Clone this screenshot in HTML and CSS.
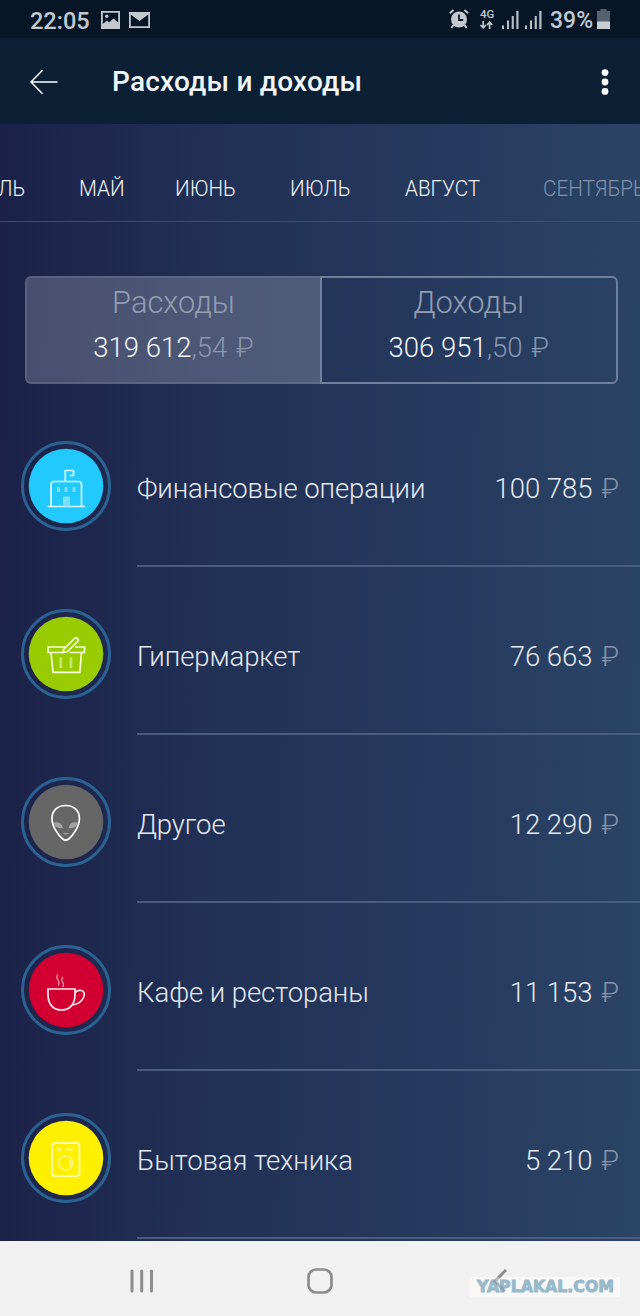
FILE: index.html
```html
<!DOCTYPE html>
<html lang="ru">
<head>
<meta charset="utf-8">
<title>Расходы и доходы</title>
<link rel="stylesheet" href="styles.css">
</head>
<body>
<div class="screen">
  <div class="status">
    <span class="time">22:05</span>
    <svg class="st-pic" width="19" height="18" viewBox="0 0 19 18"><path fill="#c3c8cf" fill-rule="evenodd" d="M0 0H19V18H0ZM1.8 1.8V13L6 9.5L8 11.5L12.5 7.5L17.2 11.5V1.8Z"/><circle cx="5.8" cy="5.2" r="1.7" fill="#c3c8cf"/></svg>
    <svg class="st-mail" width="21" height="16" viewBox="0 0 21 16"><path fill="none" stroke="#c3c8cf" stroke-width="1.8" d="M.9.9H20.1V15.1H.9Z"/><path fill="#c3c8cf" d="M1 0H20V2L10.5 9L1 2Z"/></svg>
    <span class="grow"></span>
    <svg class="st-alarm" width="20" height="20" viewBox="0 0 20 20"><g stroke="#c3c8cf" fill="none"><circle cx="10" cy="10.5" r="8" fill="#c3c8cf" stroke="none"/><path stroke-width="2" d="M.8 4.2L4.6 1M19.2 4.2L15.4 1M4.5 16L2.5 18.8M15.5 16L17.5 18.8"/><path stroke="#071626" stroke-width="1.8" d="M10 5.5V11H14.2"/></g></svg>
    <span class="net"><b>4G</b><svg width="13" height="8" viewBox="0 0 13 8"><path fill="none" stroke="#c3c8cf" stroke-width="1.7" d="M3.2 0V7M.5 4L3.2 6.8L5.9 4M9.6 8V1M6.9 4L9.6 1.2L12.3 4"/></svg></span>
    <svg class="st-sig" width="17" height="19" viewBox="0 0 17 19"><path fill="#b9bfc7" d="M0 15.500h2v3.500h-2zM5 10.500h2v8.500h-2zM9.700 6h2.100v13h-2.100zM14.300 1h2.200v18h-2.200z"/></svg>
    <svg class="st-sig" width="17" height="19" viewBox="0 0 17 19"><path fill="#b9bfc7" d="M0 15.500h2v3.500h-2zM5 10.500h2v8.500h-2zM9.700 6h2.100v13h-2.100zM14.300 1h2.200v18h-2.200z"/></svg>
    <span class="pct">39%</span>
    <svg class="st-bat" width="13" height="20" viewBox="0 0 13 20"><path fill="#56616e" d="M3.500 0h6v2H13V13H0V2H3.500z"/><path fill="#c9cdd2" d="M0 12.500H13V20H0z"/></svg>
  </div>

  <div class="appbar">
    <svg class="back" width="28" height="26" viewBox="0 0 28 26"><path fill="none" stroke="#fff" stroke-width="1.5" d="M27.500 13H1M12.500 1.200L1 13L12.500 24.800"/></svg>
    <h1>Расходы и доходы</h1>
    <svg class="more" width="8" height="26" viewBox="0 0 8 26"><g fill="#fff"><circle cx="4" cy="3.600" r="3.400"/><circle cx="4" cy="13" r="3.400"/><circle cx="4" cy="22.400" r="3.400"/></g></svg>
  </div>

  <div class="content">
    <div class="months">
      <span class="m0">ЛЬ</span><span class="m1">МАЙ</span><span class="m2">ИЮНЬ</span><span class="m3">ИЮЛЬ</span><span class="m4">АВГУСТ</span><span class="m5">СЕНТЯБРЬ</span>
    </div>

    <div class="segments">
      <div class="segment active"><span class="label">Расходы</span><span class="sum">319 612<i>,54 <em>₽</em></i></span></div>
      <div class="segment"><span class="label">Доходы</span><span class="sum">306 951<i>,50 <em>₽</em></i></span></div>
    </div>

    <div class="list">
      <div class="row">
        <svg class="badge" width="90" height="90" viewBox="0 0 90 90"><circle cx="45" cy="45" r="43.500" class="ring"/><circle cx="45" cy="45" r="37.300" fill="#22c9ff"/>
          <g fill="none" stroke="#d9fbff" stroke-width="1.700"><path d="M26.500 65.500H64M30 65.500V43.500Q30 40.500 33 40.500H57.500Q60.500 40.500 60.500 43.500V65.500M44.300 40.500V29.500H52.500V34.500H48.500"/></g>
          <g fill="#7be0ff"><path d="M36 46h3v5h-3zM43.500 46h3v5h-3zM51.500 46h3v5h-3zM42 55.500h7v10h-7z"/></g></svg>
        <div class="line"><span>Финансовые операции</span><span class="amount">100 785 <em>₽</em></span></div>
      </div>
      <div class="row">
        <svg class="badge" width="90" height="90" viewBox="0 0 90 90"><circle cx="45" cy="45" r="43.500" class="ring"/><circle cx="45" cy="45" r="37.300" fill="#9c0"/>
          <g fill="none" stroke="#f5ffd8" stroke-width="1.700"><path d="M42.500 43.500H27V38H45M48.500 43.500H63.500V38H54M30 43.500L32 63.300H58.800L60.500 43.500"/><path d="M42.500 40.500L53.500 29.500Q55 28.200 56.500 29.500Q58 31 56.600 32.500L46.500 42.500L42.300 43.500Z"/></g>
          <path fill="#c5e66b" d="M38.500 48.500h2.800v10.500h-2.800zM48.500 48.500h2.800v10.500h-2.800z"/></svg>
        <div class="line"><span>Гипермаркет</span><span class="amount">76 663 <em>₽</em></span></div>
      </div>
      <div class="row">
        <svg class="badge" width="90" height="90" viewBox="0 0 90 90"><circle cx="45" cy="45" r="43.500" class="ring"/><circle cx="45" cy="45" r="37.300" fill="#666"/>
          <path fill="none" stroke="#fff" stroke-width="1.700" d="M44.700 28.500C36.200 28.500 31 34 31 41.500C31 50 37.700 58.500 41.700 62Q44.700 64.500 47.700 62C51.700 58.500 58.400 50 58.400 41.500C58.400 34 53.200 28.500 44.700 28.500Z"/>
          <path fill="#a3a3a3" d="M32.500 45.500Q41 44.500 42 51.300Q34.500 52 32.500 45.500ZM57 45.500Q48.500 44.500 47.500 51.300Q55 52 57 45.500ZM41.700 56h6q-3 3-6 0z"/></svg>
        <div class="line"><span>Другое</span><span class="amount">12 290 <em>₽</em></span></div>
      </div>
      <div class="row">
        <svg class="badge" width="90" height="90" viewBox="0 0 90 90"><circle cx="45" cy="45" r="43.500" class="ring"/><circle cx="45" cy="45" r="37.300" fill="#d10030"/>
          <g fill="none" stroke="#ffe9ee" stroke-width="1.700"><path d="M27 44H54V50C54 59 49 65 40.500 65C32 65 27 59 27 50ZM54 48Q56 44.500 60.500 45.500Q64.800 47 62.500 52.500Q59.500 59 51.500 60"/></g>
          <path fill="none" stroke="#ee91a6" stroke-width="1.300" d="M37 29.500Q34.700 32 37 35Q39 38 37.200 40.500M42 32Q39.800 34.500 41.700 37Q43.400 40 41.500 42"/></svg>
        <div class="line"><span>Кафе и рестораны</span><span class="amount">11 153 <em>₽</em></span></div>
      </div>
      <div class="row">
        <svg class="badge" width="90" height="90" viewBox="0 0 90 90"><circle cx="45" cy="45" r="43.500" class="ring"/><circle cx="45" cy="45" r="37.300" fill="#ffef00"/>
          <rect x="31" y="30" width="27.500" height="33" rx="3" fill="none" stroke="#fffcb0" stroke-width="1.800"/>
          <g fill="none" stroke="#fff67a"><circle cx="44.800" cy="50" r="7" stroke-width="1.600"/><path stroke-width="2" d="M44.500 36.500H52.500"/></g><path fill="#fff67a" d="M49 46Q53 50 49 54Q46.800 50 49 46Z"/><circle cx="38.500" cy="36.500" r="2" fill="#fff67a"/></svg>
        <div class="line"><span>Бытовая техника</span><span class="amount">5 210 <em>₽</em></span></div>
      </div>
    </div>
  </div>

  <div class="nav">
    <svg class="recent" width="24" height="24" viewBox="0 0 24 24"><path stroke="#8c8c8c" stroke-width="3" stroke-linecap="round" d="M2 2V22M11.700 2V22M21.500 2V22"/></svg>
    <svg class="home" width="26" height="26" viewBox="0 0 26 26"><rect x="1.500" y="1.500" width="23" height="23" rx="7.500" fill="none" stroke="#8c8c8c" stroke-width="2.700"/></svg>
    <svg class="mark" width="150" height="20" viewBox="0 0 150 20"><rect width="150" height="20" fill="#fff" fill-opacity=".5"/><text x="7" y="15" textLength="137" lengthAdjust="spacingAndGlyphs">YAPLAKAL.COM</text></svg>
    <svg class="prev" width="14" height="24" viewBox="0 0 14 24"><g fill="none" stroke="#8c8c8c" stroke-width="3"><path d="M13 1L5.500 8.500"/><path stroke="#7d8f9a" stroke-opacity=".6" d="M5.500 8.500L2 12L12 22.500"/></g></svg>
  </div>
</div>
</body>
</html>
```
FILE: styles.css
```css
* { box-sizing: border-box; }
body { margin: 0; font-family: Roboto, "Noto Sans", sans-serif; }
svg { display: block; flex: none; }
i, em { font-style: normal; }
.screen { width: 640px; height: 1316px; overflow: hidden; display: flex; flex-direction: column; }

.status { height: 38px; flex: none; display: flex; align-items: flex-start; background: #071626; color: #c3c8cf; padding: 0 30px 0 30px; white-space: nowrap; }
.time { width: 71px; font-size: 23.500px; line-height: 28px; margin-top: 7px; font-weight: 500; }
.st-pic { margin-top: 11px; }
.st-mail { margin: 12px 0 0 9px; }
.grow { flex: 1; }
.st-alarm { margin: 9px 11px 0 0; }
.net { width: 14px; margin: 9px 8px 0 0; font-size: 11.500px; line-height: 11px; }
.net b { display: block; font-weight: 500; }
.net svg { margin-top: 1px; }
.st-sig { margin: 10px 6px 0 0; }
.pct { width: 44px; margin: 7px 3px 0 2px; font-size: 23px; line-height: 28px; font-weight: 500; }
.st-bat { margin-top: 9px; }

.appbar { height: 86px; flex: none; display: flex; align-items: center; background: #0c2035; padding: 2px 31px 0 30px; }
.appbar h1 { flex: 1; margin: 0 0 0 54px; font-size: 28px; letter-spacing: .2px; font-weight: 500; color: #f1f6fb; line-height: 34px; }

.content { height: 1117px; flex: none; overflow: hidden; background: linear-gradient(91deg, #1b2148 0%, #212f54 30%, #253a5e 68%, #2b4566 100%); }
.months { height: 98px; border-bottom: 1px solid #3d4f70; display: flex; align-items: flex-start; padding-top: 52px; font-size: 22px; line-height: 26px; font-weight: 300; color: #f0f3f8; white-space: nowrap; overflow: hidden; }
.months span { flex: none; transform: scaleX(.938); transform-origin: 0 50%; }
.m0 { width: 81px; margin-left: -2px; }
.m1 { width: 96px; }
.m2 { width: 115px; }
.m3 { width: 115px; }
.m4 { width: 138px; }
.m5 { color: #8492a8; }

.segments { margin: 53.500px 22.500px 0 25px; height: 108px; display: grid; grid-template-columns: 295px 1fr; }
.segment { display: flex; flex-direction: column; align-items: center; font-weight: 300; border: 2px solid #71809a; border-radius: 0 6px 6px 0; }
.segment.active { background: rgba(255, 255, 255, .2); border-color: rgba(255, 255, 255, .09); border-right: 0; border-radius: 6px 0 0 6px; }
.label { font-size: 30.800px; line-height: 36px; margin-top: 7px; color: #929eb2; }
.sum { font-size: 27.500px; line-height: 34px; margin-top: 10px; color: #f2f5fa; white-space: nowrap; }
.sum i { color: #8996ad; }
.sum em { margin-left: 2px; }

.list { margin-top: 15.500px; }
.row { height: 168px; display: flex; padding-left: 21px; }
.badge { margin-top: 42px; margin-left: -.5px; }
.ring { fill: none; stroke: #2c6292; stroke-width: 3; }
.line { flex: 1; margin-left: 26.500px; padding: 73px 21px 0 0; border-bottom: 2px solid #4b5d7d; display: flex; justify-content: space-between; font-size: 27.500px; line-height: 34px; letter-spacing: -.08px; font-weight: 300; color: #e4e9f1; white-space: nowrap; }
.amount { letter-spacing: 0; }
.amount em { color: #8794aa; margin-left: 2px; }

.nav { position: relative; height: 75px; flex: none; background: #f1f1f1; }
.nav svg { position: absolute; }
.recent { left: 130px; top: 28px; }
.home { left: 307px; top: 27px; }
.prev { left: 493px; top: 28px; }
.mark { left: 470px; top: 36px; }
.mark text { font: bold 15px "DejaVu Sans", sans-serif; fill: #98b9ca; stroke: #98b9ca; stroke-width: .9px; }
```
